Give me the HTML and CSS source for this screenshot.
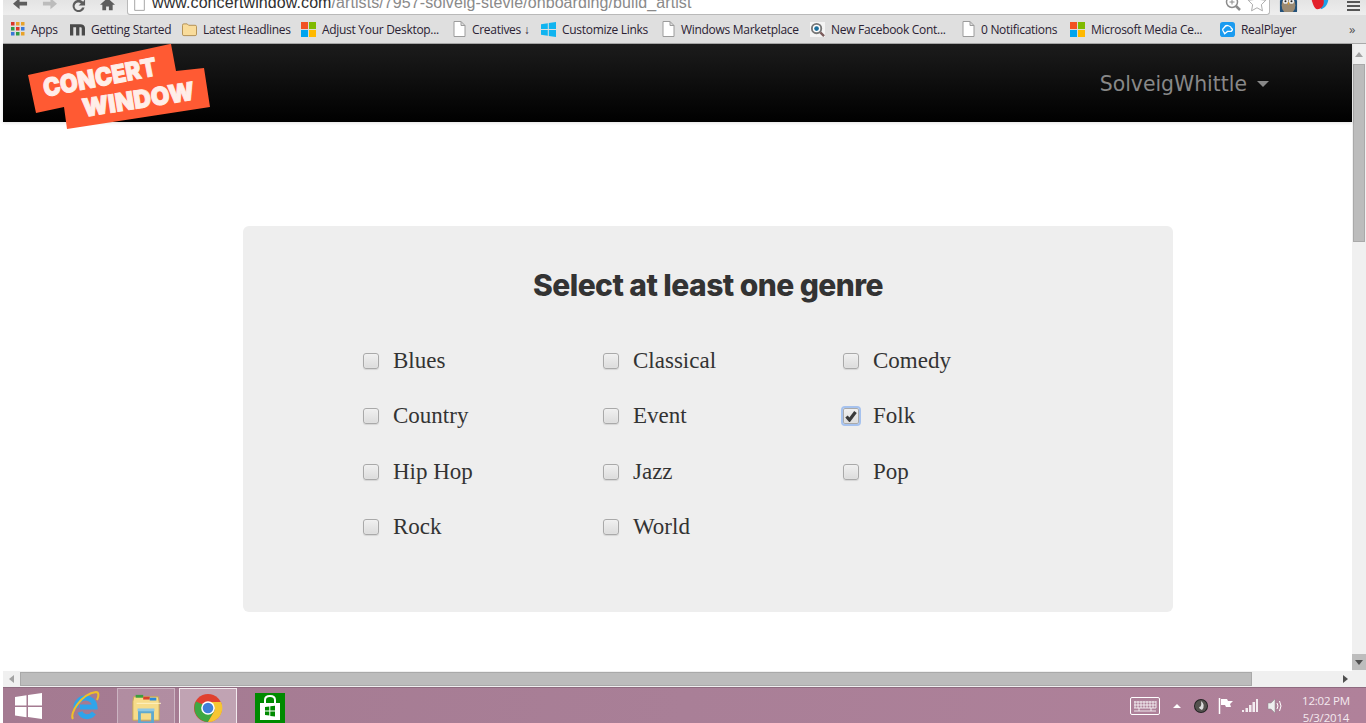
FILE: index.html
```html
<!DOCTYPE html>
<html lang="en">
<head>
<meta charset="utf-8">
<title>Concert Window</title>
<link rel="stylesheet" href="styles.css">
</head>
<body>
<header class="toolbar">
  <nav class="tool-nav">
    <svg class="tool-icon" viewBox="0 0 16 16"><path d="M15 3H7V-1L0 5l7 6V7h8z" fill="#5d5d5d"/></svg>
    <svg class="tool-icon" viewBox="0 0 16 16"><path d="M1 3h8V-1l7 6-7 6V7H1z" fill="#bcbcbc"/></svg>
    <svg class="tool-icon" viewBox="0 0 16 16"><path d="M13 3a6.500 6.500 0 1 0 1.500 6h-2.800A4 4 0 1 1 10.500 4.800L8 7h7V0z" fill="#5d5d5d"/></svg>
    <svg class="tool-icon" viewBox="0 0 16 16"><path d="M8 -1L0 6h2.500v6h4V8h3v4h4V6H16z" fill="#5d5d5d"/></svg>
  </nav>
  <div class="omnibox">
    <svg class="page-icon" viewBox="0 0 13 16"><path d="M1 -6h7l4 4v15H1z" fill="#fff" stroke="#9a9a9a"/></svg>
    <span class="url"><span class="url-host">www.concertwindow.com</span>/artists/7957-solveig-stevie/onboarding/build_artist</span>
    <span class="omni-icons">
      <svg class="zoom-icon" viewBox="0 0 16 16"><circle cx="7" cy="3" r="5.500" fill="none" stroke="#8c8c8c" stroke-width="1.500"/><path d="M11 7l4 4" stroke="#8c8c8c" stroke-width="2.500"/><path d="M4.500 3h5M7 .5v5" stroke="#8c8c8c"/></svg>
      <svg class="star-icon" viewBox="0 0 20 16"><path d="M10 -6l3 6.500 7 1-5 5 1.200 7L10 10l-6.200 3.500L5 6.500l-5-5 7-1z" fill="#fff" stroke="#a0a0a0"/></svg>
    </span>
  </div>
  <div class="extensions">
    <svg class="ext-owl" viewBox="0 0 20 14"><rect width="20" height="14" rx="1" fill="#23517a"/><ellipse cx="10" cy="6" rx="8" ry="10" fill="#9b8a72"/><circle cx="6.500" cy="1.500" r="3" fill="#eee"/><circle cx="13.500" cy="1.500" r="3" fill="#eee"/><circle cx="6.500" cy="1.500" r="1.200" fill="#222"/><circle cx="13.500" cy="1.500" r="1.200" fill="#222"/><path d="M9 3h2l-1 3z" fill="#e8a020"/></svg>
    <svg class="ext-bird" viewBox="0 0 18 12"><path d="M8 0h10c-1 6-4 9-8 10z" fill="#1da1e8"/><path d="M0 0h13c1 5-2 10-7 10C3 10 1 4 0 0z" fill="#e3202a"/></svg>
    <span class="menu-bars"><i></i><i></i><i></i></span>
  </div>
</header>

<div class="bookmarks">
  <a class="bm bm-apps"><svg class="bm-icon apps-icon" viewBox="0 0 14 14"><rect width="3.500" height="3.500" fill="#d9352a"/><rect x="5" width="3.500" height="3.500" fill="#e8a22a"/><rect x="10" width="3.500" height="3.500" fill="#e8a22a"/><rect y="5" width="3.500" height="3.500" fill="#2f9a46"/><rect x="5" y="5" width="3.500" height="3.500" fill="#d9352a"/><rect x="10" y="5" width="3.500" height="3.500" fill="#3a78d8"/><rect y="10" width="3.500" height="3.500" fill="#3a78d8"/><rect x="5" y="10" width="3.500" height="3.500" fill="#2f9a46"/><rect x="10" y="10" width="3.500" height="3.500" fill="#e8a22a"/></svg>Apps</a>
  <a class="bm bm-getting"><svg class="bm-icon" viewBox="0 0 16 13"><path d="M0 1h11c3 0 5 1.500 5 4v8h-3.500V5.500c0-1-.5-1.500-1.300-1.500H10v9H6.500V4H3.500v9H0z" fill="#4a4a4a"/></svg>Getting Started</a>
  <a class="bm bm-latest"><svg class="bm-icon" viewBox="0 0 16 14"><path d="M.5 2.500Q.5 1 2 1h3.500L7 2.500h7q1.500 0 1.500 1.500v8q0 1.500-1.500 1.500H2Q.5 13.500.5 12z" fill="#f9dc9b" stroke="#b08d4f"/></svg>Latest Headlines</a>
  <a class="bm bm-adjust"><svg class="bm-icon" viewBox="0 0 16 16"><rect width="7.500" height="7.500" fill="#f25022"/><rect x="8.500" width="7.500" height="7.500" fill="#7fba00"/><rect y="8.500" width="7.500" height="7.500" fill="#00a4ef"/><rect x="8.500" y="8.500" width="7.500" height="7.500" fill="#ffb900"/></svg>Adjust Your Desktop...</a>
  <a class="bm bm-creatives"><svg class="bm-icon doc-icon" viewBox="0 0 13 16"><path d="M1 .5h7l4 4v11H1zM8 .5v4h4" fill="#fff" stroke="#9c9c9c"/></svg>Creatives ↓</a>
  <a class="bm bm-custom"><svg class="bm-icon" viewBox="0 0 15 15"><path d="M0 2.200l6.800-1V7H0zM7.800 1L15 0v7H7.800zM0 8h6.800v5.800l-6.800-1zM7.800 8H15v7l-7.200-1z" fill="#10b4f0"/></svg>Customize Links</a>
  <a class="bm bm-market"><svg class="bm-icon doc-icon" viewBox="0 0 13 16"><path d="M1 .5h7l4 4v11H1zM8 .5v4h4" fill="#fff" stroke="#9c9c9c"/></svg>Windows Marketplace</a>
  <a class="bm bm-face"><svg class="bm-icon" viewBox="0 0 16 16"><rect width="16" height="16" fill="#f4f4f4"/><circle cx="7" cy="7" r="5" fill="#fff" stroke="#777" stroke-width="2"/><circle cx="7" cy="7" r="2.500" fill="#1c6f9c"/><path d="M11 11l4 4" stroke="#7a5c5c" stroke-width="2.500"/></svg>New Facebook Cont...</a>
  <a class="bm bm-notif"><svg class="bm-icon doc-icon" viewBox="0 0 13 16"><path d="M1 .5h7l4 4v11H1zM8 .5v4h4" fill="#fff" stroke="#9c9c9c"/></svg>0 Notifications</a>
  <a class="bm bm-media"><svg class="bm-icon" viewBox="0 0 16 16"><rect width="7.500" height="7.500" fill="#f25022"/><rect x="8.500" width="7.500" height="7.500" fill="#7fba00"/><rect y="8.500" width="7.500" height="7.500" fill="#00a4ef"/><rect x="8.500" y="8.500" width="7.500" height="7.500" fill="#ffb900"/></svg>Microsoft Media Ce...</a>
  <a class="bm bm-real"><svg class="bm-icon" viewBox="0 0 16 16"><rect width="16" height="16" rx="3" fill="#1a9bf0"/><path d="M4 10.500Q1.500 8 4.500 6 6 3 9 4t3 2.500q2.500 1.500 0 3.500L8 10l-3 2.500z" fill="none" stroke="#fff" stroke-width="1.400"/></svg>RealPlayer</a>
  <span class="bm-more">»</span>
</div>

<div class="viewport">
  <div class="page">
    <div class="navbar">
      <div class="user-menu">SolveigWhittle<span class="caret"></span></div>
    </div>
    <main class="content">
      <section class="card">
        <h1 class="card-title">Select at least one genre</h1>
        <div class="genres">
          <label class="genre"><span class="box"></span><span class="genre-name">Blues</span></label>
          <label class="genre"><span class="box"></span><span class="genre-name">Classical</span></label>
          <label class="genre"><span class="box"></span><span class="genre-name">Comedy</span></label>
          <label class="genre"><span class="box"></span><span class="genre-name">Country</span></label>
          <label class="genre"><span class="box"></span><span class="genre-name">Event</span></label>
          <label class="genre"><span class="box box-checked"><svg class="tick" viewBox="0 0 12 12"><path d="M1.500 6.500l3 3.500L10.500 2" fill="none" stroke="#3a3a3a" stroke-width="3.200"/></svg></span><span class="genre-name">Folk</span></label>
          <label class="genre"><span class="box"></span><span class="genre-name">Hip Hop</span></label>
          <label class="genre"><span class="box"></span><span class="genre-name">Jazz</span></label>
          <label class="genre"><span class="box"></span><span class="genre-name">Pop</span></label>
          <label class="genre"><span class="box"></span><span class="genre-name">Rock</span></label>
          <label class="genre"><span class="box"></span><span class="genre-name">World</span></label>
        </div>
      </section>
    </main>
    <svg class="logo" viewBox="0 0 182 85">
      <path d="M0 31L142 0h1l5 27 28-3 6 39-143 22-3-22-28 6z" fill="#ff5a33"/>
      <text class="logo-text" transform="translate(17 53) rotate(-11)" textLength="115" lengthAdjust="spacingAndGlyphs">CONCERT</text>
      <text class="logo-text" transform="translate(56 73) rotate(-9)" textLength="113" lengthAdjust="spacingAndGlyphs">WINDOW</text>
    </svg>
  </div>
  <div class="vscroll">
    <span class="arrow arrow-up"></span>
    <span class="vthumb"></span>
    <span class="down-btn"><span class="arrow arrow-down"></span></span>
  </div>
</div>

<div class="hscroll">
  <span class="arrow arrow-left"></span>
  <span class="hthumb"></span>
  <span class="arrow arrow-right"></span>
</div>

<footer class="taskbar">
  <svg class="start" viewBox="0 0 27 26"><path d="M0 4l11.500-1.700V12.500H0zM13 2L27 0v12.500H13zM0 14h11.500v10.200L0 22.500zM13 14h14v12l-14-2z" fill="#fff"/></svg>
  <svg class="ie" viewBox="0 0 32 32"><path d="M7 18a9.500 9.500 0 0 1 19-1H11m0 5c2 6 10 6 14 1" fill="none" stroke="#2fa4ea" stroke-width="5"/><path d="M4 29C0 24 12 4 27 2c3 0 3 4 1 8" fill="none" stroke="#f0c028" stroke-width="2"/></svg>
  <span class="task-btn">
    <svg class="task-icon" viewBox="0 0 32 32"><path d="M2 9l1-5h26l1 5v20H2z" fill="#f6dc8a" stroke="#c9a752"/><rect x="5" y="2" width="8" height="3" fill="#3aa040"/><rect x="13" y="4" width="7" height="3" fill="#d8402c"/><rect x="20" y="5" width="7" height="3" fill="#2a88d8"/><path d="M6 11h26" stroke="#fff3c8"/><path d="M9 20h14v12H9z" fill="none" stroke="#5ea9cf" stroke-width="3"/><path d="M7 18h18" stroke="#8fc8e4" stroke-width="3"/></svg>
  </span>
  <span class="task-btn task-btn-active">
    <svg class="task-icon" viewBox="0 0 30 30"><circle cx="15" cy="15" r="14" fill="#e0402f"/><path d="M3 8.500A14 14 0 0 0 15 29l7-12z" fill="#3ea843"/><path d="M15 9h13a14 14 0 0 1-13 20l7-12z" fill="#f6c632"/><circle cx="15" cy="15" r="6.800" fill="#fff"/><circle cx="15" cy="15" r="5.300" fill="#3f7fd9"/></svg>
  </span>
  <svg class="store" viewBox="0 0 30 30"><rect width="30" height="30" fill="#008a00"/><path d="M5 10h20v17H5z" fill="#fff"/><path d="M10 10V7q0-4 5-4t5 4v3" fill="none" stroke="#fff" stroke-width="2"/><path d="M10 14l4.300-.6v4H10zM15.300 13.300l4.700-.6v4.700h-4.700zM10 18.500h4.300v4L10 22zM15.300 18.500H20v5l-4.700-.6z" fill="#008a00"/></svg>
  <div class="tray">
    <svg class="kbd" viewBox="0 0 30 18"><rect x=".5" y=".5" width="29" height="17" rx="1.500" fill="none" stroke="#fff"/><path d="M4 5h22M4 8h22M4 11h22M4 14h22M5 4v7M8 4v7M11 4v7M14 4v7M17 4v7M20 4v7M23 4v7M26 4v7M9 11v3M21 11v3" stroke="#fff" stroke-width=".8" fill="none"/></svg>
    <span class="tray-up"></span>
    <svg class="tray-ball" viewBox="0 0 14 14"><circle cx="7" cy="7" r="7" fill="#222"/><circle cx="7" cy="7" r="6" fill="#55524f"/><path d="M7 2q5 4 1 9-3-1-3-3 3 0 2-6" fill="#ddd"/></svg>
    <svg class="tray-flag" viewBox="0 0 16 16"><path d="M1.500 0v16" stroke="#fff" stroke-width="1.500"/><path d="M3 1h6l1 2h5l-3 3 1 3H8L7 7H3z" fill="#fff"/></svg>
    <svg class="tray-signal" viewBox="0 0 16 13"><path d="M0 11h2v2H0zM3.500 9h2.500v4H3.500zM7 6h2.500v7H7zM10.500 3H13v10h-2.500zM14 0h2v13h-2z" fill="#fff" opacity=".85"/></svg>
    <svg class="tray-sound" viewBox="0 0 16 16"><path d="M1 5h3l4-4v14l-4-4H1z" fill="#eee" stroke="#888" stroke-width=".5"/><path d="M10 5q2 3 0 6M12.500 3q3 5 0 10" fill="none" stroke="#fff"/></svg>
    <div class="clock"><span>12:02 PM</span><span>5/3/2014</span></div>
  </div>
</footer>
</body>
</html>
```
FILE: styles.css
```css
html, body {
  margin: 0;
  height: 100%;
  overflow: hidden;
}
body {
  display: flex;
  flex-direction: column;
  width: 1366px;
  height: 723px;
  box-sizing: border-box;
  padding-left: 3px;
  background: #fff;
  font-family: "Open Sans", "Noto Sans", sans-serif;
}
svg { display: block; flex: none; }

/* browser toolbar */
.toolbar {
  height: 15px;
  flex: none;
  display: flex;
  align-items: flex-end;
  overflow: hidden;
  background: linear-gradient(#e4e4e4, #eeeeee);
}
.tool-nav {
  width: 124px;
  flex: none;
  display: flex;
  align-self: flex-start;
  gap: 14px;
  padding-left: 10px;
  box-sizing: border-box;
}
.tool-icon { width: 15px; height: 15px; margin-top: -1px; }
.omnibox {
  width: 1143px;
  height: 16px;
  flex: none;
  display: flex;
  align-items: flex-end;
  box-sizing: border-box;
  background: #fff;
  border: 1px solid #b9b9b9;
  border-top: 0;
  border-radius: 0 0 3px 3px;
}
.page-icon { width: 13px; height: 14px; margin: 0 0 0 5px; align-self: flex-start; }
.url {
  margin-left: 6px;
  margin-top: -6px;
  font: 16px/20px "Liberation Sans", Arial, sans-serif;
  letter-spacing: .08px;
  color: #8a8a8a;
  white-space: nowrap;
  align-self: flex-start;
}
.url-host { color: #303030; }
.omni-icons {
  margin-left: auto;
  display: flex;
  gap: 6px;
  align-self: flex-start;
  padding-right: 2px;
}
.zoom-icon { width: 16px; height: 16px; }
.star-icon { width: 20px; height: 14px; }
.extensions {
  flex: 1;
  display: flex;
  align-self: flex-start;
  align-items: flex-start;
  padding-left: 9px;
}
.ext-owl { width: 19px; height: 12px; }
.ext-bird { width: 18px; height: 11px; margin-left: 13px; }
.menu-bars {
  margin-left: 18px;
  width: 13px;
  display: flex;
  flex-direction: column;
  gap: 2px;
  padding-top: 1px;
}
.menu-bars i { height: 2px; background: #555; }

/* bookmarks */
.bookmarks {
  height: 29px;
  flex: none;
  display: flex;
  align-items: center;
  box-sizing: border-box;
  background: #dfdfdf;
  border-bottom: 1px solid #a9a9a9;
  font-size: 12px;
  letter-spacing: -.3px;
  color: #2b2233;
  white-space: nowrap;
  padding-left: 8px;
}
.bm { display: flex; align-items: center; gap: 6px; }
.bm-icon { width: 15px; height: 15px; }
.apps-icon { width: 14px; height: 14px; }
.doc-icon { width: 13px; height: 16px; }
.bm-apps { width: 59px; }
.bm-getting { width: 112px; }
.bm-latest { width: 119px; }
.bm-adjust { width: 152px; }
.bm-creatives { width: 88px; }
.bm-custom { width: 121px; }
.bm-market { width: 148px; }
.bm-face { width: 152px; }
.bm-notif { width: 108px; }
.bm-media { width: 150px; }
.bm-real { width: 129px; }
.bm-more { font-size: 13px; color: #555; }

/* page */
.viewport {
  height: 627px;
  flex: none;
  display: flex;
}
.page {
  flex: 1;
  min-width: 0;
  position: relative;
  display: flex;
  flex-direction: column;
}
.navbar {
  height: 78px;
  flex: none;
  box-sizing: border-box;
  background: linear-gradient(#1c1c1c, #000);
  display: flex;
  justify-content: flex-end;
  align-items: center;
  padding: 2px 83px 0 0;
  box-shadow: 0 1px 3px rgba(0,0,0,.12);
}
.user-menu {
  display: flex;
  align-items: center;
  font: 20.400px/28px "DejaVu Sans", Verdana, sans-serif;
  color: #888;
}
.caret {
  margin: 0 0 0 10px;
  width: 0;
  height: 0;
  border-left: 6px solid transparent;
  border-right: 6px solid transparent;
  border-top: 6px solid #888;
}
.content {
  flex: 1;
  display: flex;
  padding: 104px 0 0 240px;
}
.card {
  width: 930px;
  height: 386px;
  box-sizing: border-box;
  background: #eee;
  border-radius: 6px;
  padding: 38px 0 0 120px;
}
.card-title {
  margin: 0 0 0 -120px;
  text-align: center;
  font: 800 30px/42px Inter, sans-serif;
  letter-spacing: -.55px;
  color: #333;
}
.genres {
  display: grid;
  grid-template-columns: repeat(3, 240px);
  grid-auto-rows: 55.300px;
  margin-top: 35px;
}
.genre {
  display: flex;
  align-items: center;
  gap: 14px;
  height: 40px;
}
.box {
  width: 16px;
  height: 16px;
  box-sizing: border-box;
  border: 1px solid #a9a9a9;
  border-radius: 3px;
  background: linear-gradient(#f0f0f0, #dcdcdc);
  box-shadow: 0 1px 1px rgba(0,0,0,.1), inset 0 0 1px #fff;
  display: flex;
  align-items: center;
  justify-content: center;
}
.box-checked { outline: 2px solid #a6c2ee; border-radius: 2px; }
.tick { width: 12px; height: 12px; }
.genre-name {
  font: 23px/30px "Liberation Serif", "Times New Roman", serif;
  color: #333;
}
.logo {
  position: absolute;
  left: 25px;
  top: 0;
  width: 182px;
  height: 85px;
}
.logo-text {
  font: 900 25px Inter, sans-serif;
  fill: #ffeee9;
  stroke: #ffeee9;
  stroke-width: .9px;
}

/* scrollbars */
.vscroll {
  width: 14px;
  flex: none;
  display: flex;
  flex-direction: column;
  align-items: center;
  background: #f0f0f0;
}
.vthumb {
  width: 12px;
  height: 178px;
  margin-top: 7px;
  background: #bcbcbc;
  border: 1px solid #a9a9a9;
  box-sizing: border-box;
}
.arrow { width: 0; height: 0; border: 4px solid transparent; flex: none; }
.arrow-up { border-bottom: 5px solid #a3a3a3; border-top: 0; margin-top: 8px; }
.down-btn {
  width: 14px;
  height: 16px;
  margin-top: auto;
  margin-bottom: 1px;
  background: #bdbdbd;
  display: flex;
  align-items: center;
  justify-content: center;
}
.arrow-down { border-top: 5px solid #505050; border-bottom: 0; }
.hscroll {
  height: 16px;
  flex: none;
  display: flex;
  align-items: center;
  background: #f0f0f0;
}
.hthumb {
  width: 1232px;
  height: 14px;
  margin-left: 6px;
  background: #bcbcbc;
  border: 1px solid #a9a9a9;
  box-sizing: border-box;
}
.arrow-left { border-right: 5px solid #a3a3a3; border-left: 0; margin-left: 6px; }
.arrow-right { border-left: 5px solid #505050; border-right: 0; margin-left: auto; margin-right: 18px; }

/* taskbar */
.taskbar {
  height: 36px;
  flex: none;
  display: flex;
  align-items: center;
  box-sizing: border-box;
  background: linear-gradient(100deg, #a47a91, #a97f97 50%, #b0819a);
  border-top: 1px solid #8f6b80;
  overflow: hidden;
  padding-left: 12px;
}
.start { width: 27px; height: 26px; }
.ie { width: 32px; height: 32px; margin-left: 27px; }
.task-btn {
  width: 58px;
  height: 38px;
  flex: none;
  box-sizing: border-box;
  display: flex;
  justify-content: center;
  padding-top: 4px;
  margin-left: 4px;
  border: 1px solid rgba(255,255,255,.35);
  background: rgba(255,255,255,.14);
  align-self: flex-start;
}
.ie + .task-btn { margin-left: 16px; }
.task-btn-active { border-color: #f2e8ed; background: rgba(255,255,255,.3); }
.task-icon { width: 30px; height: 30px; }
.store { width: 30px; height: 30px; margin: 5px 0 0 18px; align-self: flex-start; }
.tray {
  margin-left: auto;
  display: flex;
  align-items: center;
  color: #f4e9ef;
}
.kbd { width: 30px; height: 18px; }
.tray-up {
  width: 0;
  height: 0;
  margin-left: 13px;
  border-left: 4px solid transparent;
  border-right: 4px solid transparent;
  border-bottom: 4px solid #fff;
}
.tray-ball { width: 14px; height: 14px; margin-left: 13px; }
.tray-flag { width: 16px; height: 16px; margin-left: 10px; }
.tray-signal { width: 16px; height: 13px; margin-left: 8px; }
.tray-sound { width: 16px; height: 16px; margin-left: 9px; }
.clock {
  width: 64px;
  margin: 6px 8px 0 11px;
  display: flex;
  flex-direction: column;
  align-items: center;
  font-size: 11.500px;
  line-height: 17px;
  letter-spacing: -.2px;
}
```
